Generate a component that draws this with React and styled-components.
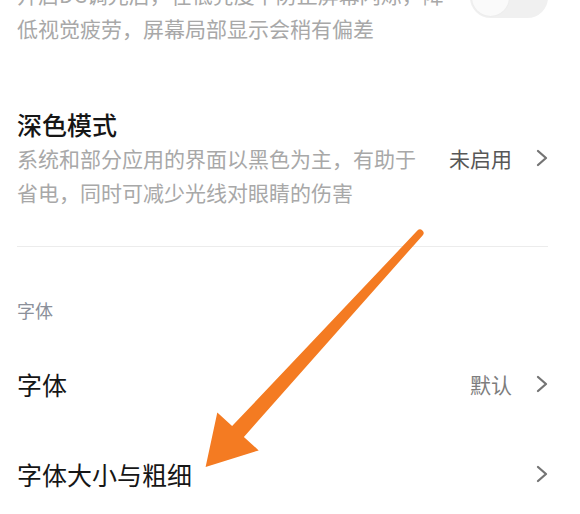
import React from "react";
import styled, { createGlobalStyle } from "styled-components";

const GlobalStyle = createGlobalStyle`
  html, body {
    margin: 0;
    padding: 0;
    background: #ffffff;
    overflow: hidden;
  }
  body {
    font-family: "Noto Sans CJK SC", "Noto Sans", sans-serif;
  }
`;

const App = () => {
  return (
    <Page>
      <GlobalStyle />
      <List>
        <Row align="flex-start">
          <Desc width={438}>
            开启DC调光后，在低亮度下防止屏幕闪烁，降低视觉疲劳，屏幕局部显示会稍有偏差
          </Desc>
          <Toggle>
            <Knob />
          </Toggle>
        </Row>

        <Row gap={62}>
          <TextBlock>
            <Title weight={500}>深色模式</Title>
            <Desc width={410}>
              系统和部分应用的界面以黑色为主，有助于省电，同时可减少光线对眼睛的伤害
            </Desc>
          </TextBlock>
          <ValueGroup>
            <Value>未启用</Value>
            <Chevron />
          </ValueGroup>
        </Row>

        <Divider />
        <SectionLabel>字体</SectionLabel>

        <NavRow first>
          <Title>字体</Title>
          <ValueGroup>
            <Value light>默认</Value>
            <Chevron />
          </ValueGroup>
        </NavRow>
        <NavRow>
          <Title>字体大小与粗细</Title>
          <ValueGroup>
            <Chevron />
          </ValueGroup>
        </NavRow>
      </List>

      <Arrow viewBox="0 0 580 514">
        <path d="M417.4 230.6 A3.5 3.5 0 0 1 422.6 235.4 L243.9 436.9 L258.7 450.4 L205.6 466.9 L217.3 412.6 L232.1 426.1 Z" />
      </Arrow>
    </Page>
  );
};

const Chevron = () => (
  <ChevronSvg viewBox="0 0 12 18">
    <path d="M2 2 L10 9 L2 16" />
  </ChevronSvg>
);

const Page = styled.div`
  position: relative;
  width: 580px;
  height: 514px;
  overflow: hidden;
  background: #ffffff;
`;
const List = styled.div`
  display: flex;
  flex-direction: column;
  margin-top: -23px;
  padding: 0 32px 0 17px;
`;
const Row = styled.div`
  display: flex;
  justify-content: space-between;
  align-items: ${(props) => props.align || "center"};
  margin-top: ${(props) => props.gap || 0}px;
`;
const TextBlock = styled.div`
  display: flex;
  flex-direction: column;
`;
const Title = styled.div`
  font-size: 25px;
  line-height: 34px;
  font-weight: ${(props) => props.weight || 400};
  color: #161616;
`;
const Desc = styled.div`
  width: ${(props) => props.width}px;
  font-size: 21px;
  line-height: 34px;
  color: #a8a8a8;
`;
const Toggle = styled.div`
  display: flex;
  align-items: center;
  width: 78px;
  height: 41px;
  padding: 2px;
  box-sizing: border-box;
  border-radius: 21px;
  background: #f0f0f0;
`;
const Knob = styled.div`
  width: 37px;
  height: 37px;
  border-radius: 50%;
  background: #fafafa;
  box-shadow: 0 0 2px rgba(0, 0, 0, 0.05);
`;
const ValueGroup = styled.div`
  display: flex;
  align-items: center;
  gap: 24px;
`;
const Value = styled.span`
  font-size: 21px;
  line-height: 34px;
  color: ${(props) => (props.light ? "#7d7d7d" : "#575757")};
`;
const ChevronSvg = styled.svg`
  width: 12px;
  height: 18px;
  fill: none;
  stroke: #747474;
  stroke-width: 2.3;
  stroke-linecap: round;
  stroke-linejoin: round;
`;
const Divider = styled.div`
  margin-top: 37px;
  height: 1px;
  background: #ececec;
`;
const SectionLabel = styled.div`
  margin-top: 50px;
  font-size: 18px;
  line-height: 26px;
  color: #8b909a;
`;
const NavRow = styled.div`
  display: flex;
  justify-content: space-between;
  align-items: center;
  height: 90px;
  margin-top: ${(props) => (props.first ? 16 : 0)}px;
`;
const Arrow = styled.svg`
  position: absolute;
  left: 0;
  top: 0;
  width: 580px;
  height: 514px;
  pointer-events: none;
  fill: #f47b22;
`;

export default App;
